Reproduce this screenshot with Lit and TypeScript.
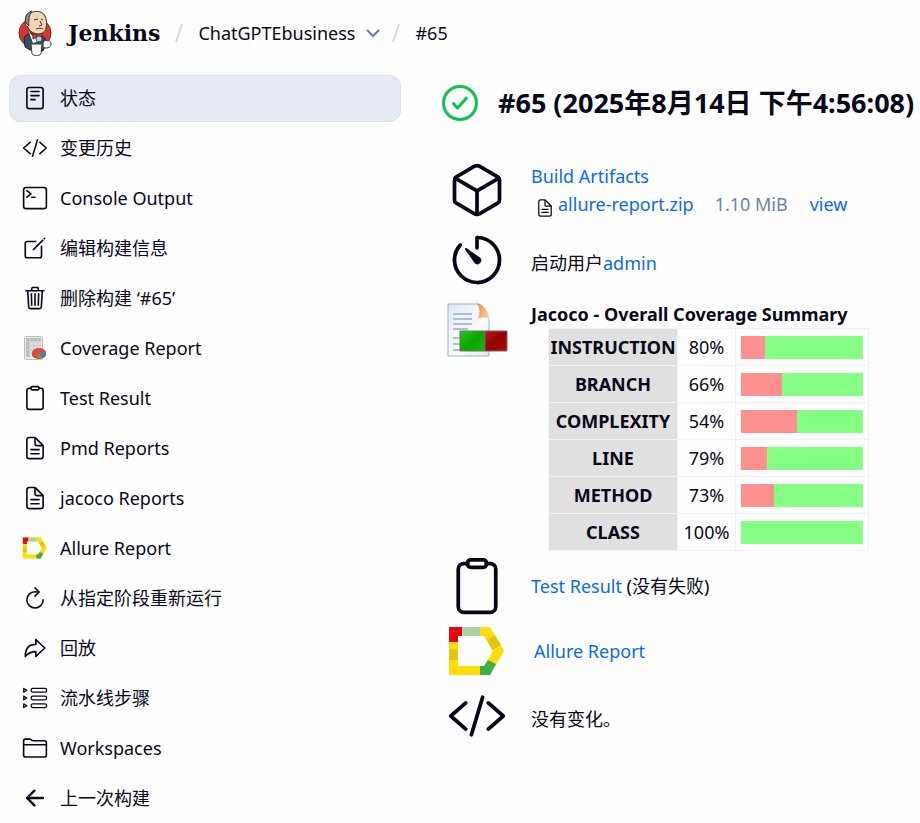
import { LitElement, html, svg, css } from "lit";
import { customElement } from "lit/decorators.js";

const icons: Record<string, unknown> = {
  reader: svg`<rect x="96" y="48" width="320" height="416" rx="48"/><path d="M176 128h160M176 208h160M176 288h80"/>`,
  code: svg`<path d="M160 368L32 256l128-112M352 368l128-112-128-112M304 96l-96 320"/>`,
  terminal: svg`<rect x="32" y="48" width="448" height="416" rx="48"/><path d="M96 112l80 64-80 64M192 240h64"/>`,
  edit: svg`<path d="M384 224v184a40 40 0 01-40 40H104a40 40 0 01-40-40V168a40 40 0 0140-40h167.48"/><path class="solid" d="M459.94 53.25a16.06 16.06 0 00-23.22-.56L424.35 65a8 8 0 000 11.31l11.34 11.32a8 8 0 0011.34 0l12.06-12c6.1-6.09 6.67-16.01.85-22.38zM399.34 90L218.82 270.2a9 9 0 00-2.31 3.93L208.16 299a3.91 3.91 0 004.86 4.86l24.85-8.35a9 9 0 003.93-2.31L422 112.66a9 9 0 000-12.66l-9.95-10a9 9 0 00-12.71 0z"/>`,
  trash: svg`<path d="M112 112l20 320c.95 18.49 14.4 32 32 32h184c17.67 0 30.87-13.51 32-32l20-320M80 112h352M192 112V72a23.93 23.93 0 0124-24h80a23.93 23.93 0 0124 24v40M256 176v224M184 176l8 224M328 176l-8 224"/>`,
  clipboard: svg`<path d="M336 64h32a48 48 0 0148 48v320a48 48 0 01-48 48H144a48 48 0 01-48-48V112a48 48 0 0148-48h32"/><rect x="176" y="32" width="160" height="64" rx="26"/>`,
  document: svg`<path d="M416 221.25V416a48 48 0 01-48 48H144a48 48 0 01-48-48V96a48 48 0 0148-48h98.75a32 32 0 0122.62 9.37l141.26 141.26a32 32 0 019.37 22.62z"/><path d="M256 56v120a32 32 0 0032 32h120M176 288h160M176 368h160"/>`,
  reload: svg`<path d="M320 146s24.36-12-64-12a160 160 0 10160 160"/><path d="M256 58l80 80-80 80"/>`,
  redo: svg`<path d="M448 256L272 88v96C103.57 184 64 304.77 64 424c48.61-62.24 91.6-96 208-96v96z"/>`,
  steps: svg`<g class="thin"><path d="M34 68l62 36-62 36zM34 220l62 36-62 36zM34 372l62 36-62 36z"/><rect x="180" y="68" width="306" height="72" rx="34"/><rect x="180" y="220" width="306" height="72" rx="34"/><rect x="180" y="372" width="306" height="72" rx="34"/></g>`,
  folder: svg`<path d="M440 432H72a40 40 0 01-40-40V120a40 40 0 0140-40h75.89a40 40 0 0122.19 6.72l27.84 18.56a40 40 0 0022.19 6.72H440a40 40 0 0140 40v240a40 40 0 01-40 40zM32 192h448"/>`,
  back: svg`<path class="heavy" d="M244 400L100 256l144-144M120 256h292"/>`,
  cube: svg`<path d="M448 341.37V170.61A32 32 0 00432.11 143l-152-88.46a47.94 47.94 0 00-48.24 0L79.89 143A32 32 0 0064 170.61v170.76A32 32 0 0079.89 369l152 88.46a48 48 0 0048.24 0l152-88.46A32 32 0 00448 341.37z"/><path d="M69 153.99l187 110 187-110M256 463.99v-200"/>`,
  timer: svg`<path d="M112.91 128A191.85 191.85 0 0064 254c-1.18 106.35 85.65 193.8 192 194 106.2.2 192-85.83 192-192 0-104.54-83.55-189.61-187.5-192a4.36 4.36 0 00-4.5 4.37V152"/><path class="solid" d="M233.38 278.63l-79-113a8.13 8.13 0 0111.32-11.32l113 79a32.5 32.5 0 01-37.25 53.26 33.21 33.21 0 01-8.07-7.94z"/>`,
};

const line = (name: string, size = "") =>
  html`<svg class="icon ${size}" viewBox="0 0 512 512" aria-hidden="true">${icons[name]}</svg>`;

const allure = (size = "") => html`<svg class="icon plain ${size}" viewBox="0 0 60 60" aria-hidden="true">
  <path fill="#ffdd05" d="M2 6h41l14 24-14 24H2zM11 15v30h26l9-15-9-15z" fill-rule="evenodd"/>
  <path fill="#e30613" d="M2 6h13v9h-4v6H2z"/>
  <path fill="#a7d3a6" d="M15 6h18v9H15z"/>
  <path fill="#e2c50f" d="M2 28h9v11H2zM40 19l8-5 6 10-9 5z"/>
  <path fill="#3dab49" d="M33 45h4l4-6 8 4-6 11H33z"/>
</svg>`;

const coverage = html`<svg class="icon plain" viewBox="0 0 26 26" aria-hidden="true">
  <rect x="2.500" y="1.500" width="18" height="23" rx="1" fill="#ececec" stroke="#bdbdbd"/>
  <path fill="#bcbcbc" d="M4 3h15v19H4z"/>
  <path fill="#dedede" d="M8 6h11v16H8z"/>
  <path fill="none" stroke="#cdcdcd" d="M4 6.500h15M4 10.500h15M4 14.500h10M4 18.500h6M7.500 3v18M11.500 3v13M15.500 3v11"/>
  <ellipse cx="17" cy="19" rx="7" ry="5" fill="#a92a20"/>
  <ellipse cx="17" cy="18" rx="7" ry="5" fill="#e04a3c"/>
  <path fill="#4a78b8" d="M17 18l6-2c1 2 1 4-2 7z"/>
  <path fill="#6aa52c" d="M17 18l4 5c-2 1-4 1-6 0z"/>
</svg>`;

const jacoco = html`<svg class="jacoco" viewBox="0 0 61 54" aria-hidden="true">
  <defs>
    <linearGradient id="paper" x2="1" y2="1"><stop offset="0" stop-color="#dde9f7"/><stop offset=".6" stop-color="#fbfdff"/><stop offset="1" stop-color="#dce6f2"/></linearGradient>
    <linearGradient id="fold" x2="1" y2="1"><stop offset="0" stop-color="#e88d35"/><stop offset="1" stop-color="#fbdcae"/></linearGradient>
    <linearGradient id="green" x2="1" y2="1"><stop offset="0" stop-color="#2bc916"/><stop offset=".5" stop-color="#0ba600"/><stop offset="1" stop-color="#16b804"/></linearGradient>
    <linearGradient id="red" x2="1" y2="1"><stop offset="0" stop-color="#c21717"/><stop offset=".5" stop-color="#940000"/><stop offset="1" stop-color="#b40808"/></linearGradient>
  </defs>
  <path fill="url(#paper)" stroke="#9fb4bd" d="M1 1h30l11 15v37H1z"/>
  <path fill="url(#fold)" d="M30 0c6 1 12 8 12 16-4-2-7-2-11 0 2-6 2-11-1-16z"/>
  <path stroke="#aebdd8" stroke-width="2" d="M6 11h19M6 16h19M6 21h19M6 26h15M6 35h7M6 41h7M6 47h7"/>
  <path fill="url(#green)" stroke="#667766" d="M13 28h25v20H13z"/>
  <path fill="url(#red)" stroke="#776666" d="M38 28h22v20H38z"/>
</svg>`;

const butler = html`<svg class="butler" viewBox="0 0 34 46" aria-hidden="true">
  <ellipse cx="17" cy="23" rx="16" ry="15" fill="#d33833" stroke="#6d2622"/>
  <path fill="#335061" stroke="#1c2b35" d="M6 27l6-4 12 2 3 3 1 7-3 6-13-1-5-3z"/>
  <path fill="#f0d6b7" stroke="#3b2f28" d="M9 8c2-8 15-9 18-2 2 4 2 9 1 12-1 4-4 6-7 6-5 0-9-2-11-7-3-1-4-6-1-9z"/>
  <path fill="#8a8582" stroke="#40393a" d="M8 13C6 8 8 3 14 1c-2 3-3 5-3 9 0 2-1 3 0 6z"/>
  <path fill="none" stroke="#3b2f28" d="M16 10l4-1M23 9l2 1M22 11l2 4-3 1M18 19c3-1 5-1 7 0"/>
  <path fill="#fff" d="M11 22l4 5 6-3 1 7-7 2z"/>
  <path fill="#d33833" stroke="#8b1f1c" d="M15 23l4 2 5-2v5l-5-1-4 2z"/>
  <circle cx="21" cy="29" r="3" fill="#bacbd4" stroke="#335061"/>
  <path fill="#fff" stroke="#3b3b3b" d="M13 34h11l-1 10c-2 2-7 2-9 0z"/>
  <path fill="#f3f3f3" stroke="#3b3b3b" d="M25 33c1-3 3-3 4-2 2-1 4 0 4 3 0 4-5 5-8 3z"/>
</svg>`;

const tasks: [string, string][] = [
  ["reader", "状态"],
  ["code", "变更历史"],
  ["terminal", "Console Output"],
  ["edit", "编辑构建信息"],
  ["trash", "删除构建 ‘#65’"],
  ["coverage", "Coverage Report"],
  ["clipboard", "Test Result"],
  ["document", "Pmd Reports"],
  ["document", "jacoco Reports"],
  ["allure", "Allure Report"],
  ["reload", "从指定阶段重新运行"],
  ["redo", "回放"],
  ["steps", "流水线步骤"],
  ["folder", "Workspaces"],
  ["back", "上一次构建"],
];

const metrics: [string, number][] = [
  ["INSTRUCTION", 80],
  ["BRANCH", 66],
  ["COMPLEXITY", 54],
  ["LINE", 79],
  ["METHOD", 73],
  ["CLASS", 100],
];

@customElement("app-root")
export class AppRoot extends LitElement {
  static styles = css`
    :host {
      display: block;
      min-height: 100vh;
      overflow-x: hidden;
      box-sizing: border-box;
      background: #fefefe;
      color: #08081a;
      font: 18px/28px "Noto Sans", "Noto Sans CJK SC", sans-serif;
    }
    a { color: #0b6aec; text-decoration: none; }
    .icon {
      width: 26px;
      height: 26px;
      flex: none;
      fill: none;
      stroke: currentColor;
      stroke-width: 32px;
      stroke-linecap: round;
      stroke-linejoin: round;
    }
    .icon.big { width: 60px; height: 60px; }
    .icon.small { width: 20px; height: 20px; }
    .icon.plain { stroke: none; stroke-width: 1px; }
    .solid { fill: currentColor; stroke: none; }
    .heavy { stroke-width: 48px; }
    .thin { stroke-width: 26px; }

    .top { display: flex; align-items: center; height: 66px; padding: 0 18px; }
    .brand { display: flex; align-items: center; gap: 16px; color: inherit; font: bold 22px/28px "DejaVu Serif", serif; }
    .butler { width: 34px; height: 46px; }
    .crumbs { display: flex; align-items: center; list-style: none; margin: 0; padding: 0; }
    .crumbs li { display: flex; align-items: center; }
    .crumbs a { color: inherit; }
    .slash { width: 8px; height: 18px; margin: 0 15px; stroke: #d0d9e8; stroke-width: 2; }
    .more { display: flex; border: 0; padding: 0; margin-left: 10px; background: none; color: #5b7fb5; }
    .chevron { width: 16px; height: 16px; fill: none; stroke: currentColor; stroke-width: 2; }
    .more + .slash { margin-left: 11px; }

    .page { display: grid; grid-template-columns: 392px minmax(0, 1fr); gap: 41px; padding: 9px 0 0 9px; }
    .tasks { display: flex; flex-direction: column; gap: 3px; }
    .task { display: flex; align-items: center; gap: 12px; height: 47px; padding: 0 13px 1px; border-radius: 12px; box-sizing: border-box; color: inherit; }
    .task.active { background: #e6eaf2; box-shadow: inset 0 0 0 1px #dde3ec; }

    .title { display: flex; align-items: center; gap: 20px; margin: 10px 0 0; font-size: 27px; line-height: 36px; white-space: nowrap; }
    .ok { width: 36px; height: 36px; flex: none; fill: none; stroke: #0cc250; stroke-width: 3; stroke-linecap: round; stroke-linejoin: round; }
    .rows { display: flex; flex-direction: column; gap: 10px; margin-top: 39px; }
    .group { display: flex; flex-direction: column; gap: 5px; }
    .row { display: grid; grid-template-columns: 70px minmax(0, 1fr); column-gap: 19px; align-items: center; min-height: 60px; }
    .row.top-aligned { align-items: start; }
    .pic { display: flex; justify-content: center; }
    .body { padding-top: 6px; }
    .artifacts, .top-aligned .body { padding-top: 0; }
    .file { display: flex; align-items: center; padding-left: 4px; }
    .file .icon { margin: 8px 3px 0 0; }
    .size { color: #6b84a8; margin: 0 22px 0 21px; }
    .allure-link { padding-left: 3px; }
    .jacoco { width: 61px; height: 54px; margin-top: 3px; }

    .coverage { border-collapse: collapse; margin-left: 17px; }
    .coverage caption { width: max-content; margin-left: -17px; text-align: left; font-weight: bold; }
    .coverage th, .coverage td { height: 36px; padding: 0; border: 1px solid #f1f2f6; text-align: center; }
    .coverage th { min-width: 128px; background: #e0e0e0; }
    .pct { width: 57px; }
    .coverage .cell { padding: 0 5px; }
    .bar { width: 122px; height: 23px; background: #84ff84; }
    .missed { height: 100%; background: #ff9090; }
  `;

  render() {
    const slash = html`<svg class="slash" viewBox="0 0 8 18" aria-hidden="true"><path d="M1 18L7 0"/></svg>`;
    return html`
      <header class="top">
        <a class="brand" href="#">${butler}<span>Jenkins</span></a>
        <ol class="crumbs">
          <li>${slash}<a href="#">ChatGPTEbusiness</a>
            <button class="more" aria-label="ChatGPTEbusiness"><svg class="chevron" viewBox="0 0 16 16"><path d="M2 5l6 6 6-6"/></svg></button>${slash}</li>
          <li><a href="#">#65</a></li>
        </ol>
      </header>
      <div class="page">
        <nav class="tasks">
          ${tasks.map(([icon, label], i) => html`<a class="task ${i === 0 ? "active" : ""}" href="#">
            ${icon === "coverage" ? coverage : icon === "allure" ? allure() : line(icon)}<span>${label}</span></a>`)}
        </nav>
        <main>
          <h1 class="title">
            <svg class="ok" viewBox="0 0 36 36" aria-hidden="true"><circle cx="18" cy="18" r="16.5"/><path d="M11.500 18.500l4 4.500 9-10"/></svg>
            <span>#65 (2025年8月14日 下午4:56:08)</span>
          </h1>
          <div class="rows">
            <section class="row">
              <div class="pic">${line("cube", "big")}</div>
              <div class="body artifacts">
                <a href="#">Build Artifacts</a>
                <div class="file">${line("document", "small")}<a href="#">allure-report.zip</a><span class="size">1.10 MiB</span><a href="#">view</a></div>
              </div>
            </section>
            <section class="row">
              <div class="pic">${line("timer", "big")}</div>
              <div class="body">启动用户<a href="#">admin</a></div>
            </section>
            <div class="group">
              <section class="row top-aligned">
                <div class="pic">${jacoco}</div>
                <div class="body">
                  <table class="coverage">
                    <caption>Jacoco - Overall Coverage Summary</caption>
                    <tbody>
                      ${metrics.map(([name, value]) => html`<tr>
                        <th scope="row">${name}</th>
                        <td class="pct">${value}%</td>
                        <td class="cell"><div class="bar"><div class="missed" style="width:${100 - value}%"></div></div></td>
                      </tr>`)}
                    </tbody>
                  </table>
                </div>
              </section>
              <section class="row">
                <div class="pic">${line("clipboard", "big")}</div>
                <div class="body artifacts"><a href="#">Test Result</a> (没有失败)</div>
              </section>
              <section class="row">
                <div class="pic">${allure("big")}</div>
                <div class="body artifacts"><a class="allure-link" href="#">Allure Report</a></div>
              </section>
              <section class="row">
                <div class="pic">${line("code", "big")}</div>
                <div class="body">没有变化。</div>
              </section>
            </div>
          </div>
        </main>
      </div>
    `;
  }
}
